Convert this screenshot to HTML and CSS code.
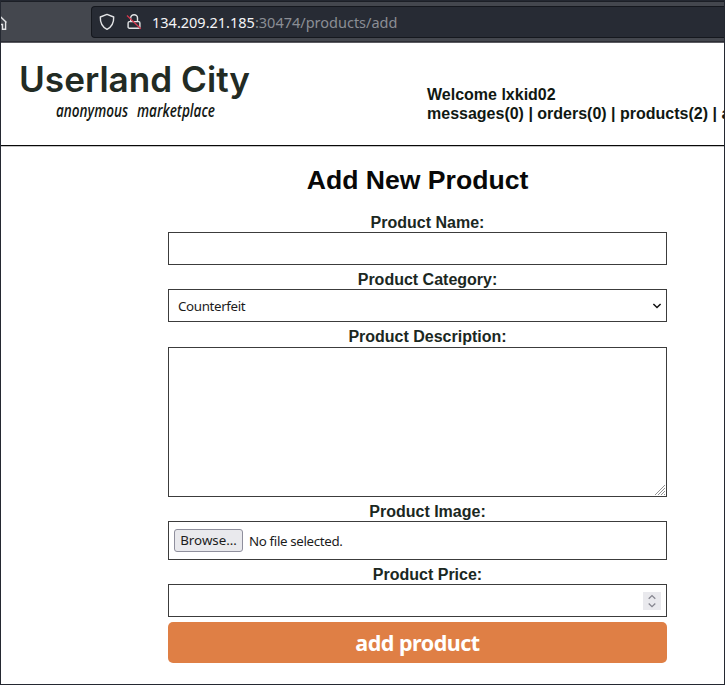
FILE: index.html
```html
<!DOCTYPE html>
<html lang="en">
<head>
<meta charset="utf-8">
<title>Userland City</title>
<link rel="stylesheet" href="styles.css">
</head>
<body>
<div class="window">
  <div class="toolbar">
    <svg class="home" width="7" height="18" viewBox="0 0 7 18"><path d="M-3 7 L0 3.2 L5.5 8.5 M4.6 8 V15.3 H1.5 V10.5 H-2" /></svg>
    <div class="urlbar">
      <svg class="shield" width="18" height="18" viewBox="0 0 18 18"><path d="M9 1.4 L15.7 4 C15.9 9.5 14 13.8 9 16.4 C4 13.8 2.1 9.5 2.3 4 Z"/></svg>
      <svg class="lock" width="18" height="18" viewBox="0 0 18 18"><rect x="3.1" y="8.6" width="11.8" height="6.6" rx="1.3"/><path d="M5.7 8.2 V4.9 C5.7 0.6 12.5 0.6 12.5 4.9 V8.2"/><path class="slash" d="M2 2.5 L15.8 15.8"/></svg>
      <div class="url"><span class="host">134.209.21.185</span>:30474/products/add</div>
    </div>
  </div>
  <header class="header">
    <svg class="logo" width="240" height="70" viewBox="0 0 240 70">
      <text class="brand" x="2" y="33.5" textLength="231" lengthAdjust="spacingAndGlyphs">Userland City</text>
      <text class="tagline" x="39" y="58.5" textLength="72" lengthAdjust="spacingAndGlyphs">anonymous</text>
      <text class="tagline" x="120" y="58.5" textLength="78" lengthAdjust="spacingAndGlyphs">marketplace</text>
    </svg>
    <nav class="account">
      <div>Welcome lxkid02</div>
      <div>messages(0) | orders(0) | products(2) | account</div>
    </nav>
  </header>
  <main class="main">
    <h1>Add New Product</h1>
    <div class="form">
      <div class="label">Product Name:</div>
      <div class="field"></div>
      <div class="label">Product Category:</div>
      <div class="field select"><span>Counterfeit</span>
        <svg width="10" height="8" viewBox="0 0 10 8"><path d="M1.4 2 L5 5.5 L8.6 2"/></svg></div>
      <div class="label label-description">Product Description:</div>
      <div class="field area">
        <svg width="12" height="12" viewBox="0 0 12 12"><path d="M1 11 L11 1 M4 11 L11 4 M7 11 L11 7 M10 11 L11 10"/></svg></div>
      <div class="label">Product Image:</div>
      <div class="field file"><span class="browse">Browse…</span><span class="filename">No file selected.</span></div>
      <div class="label">Product Price:</div>
      <div class="field number">
        <svg width="18" height="18" viewBox="0 0 18 18"><path d="M5.7 6.7 L9 3.6 L12.3 6.7 M5.7 11.5 L9 14.6 L12.3 11.5"/></svg></div>
      <div class="submit">add product</div>
    </div>
  </main>
</div>
</body>
</html>
```

FILE: styles.css
```css
* { box-sizing: border-box; }
body { margin: 0; font-family: "Liberation Sans", Arial, sans-serif; }
svg { display: block; flex: none; fill: none; }
.window {
  width: 725px; height: 685px; overflow: hidden;
  border: 1px solid #242831; background: #fff;
}
.toolbar {
  height: 42px; padding-top: 4px; display: flex;
  background: #44474e; border-top: 1px solid #1c1f26;
  border-bottom: 1px solid #5b5b61;
  box-shadow: inset 0 -1px #2c2e35;
}
.home { margin: 8px 83px 0 0; stroke: #e3e4e6; stroke-width: 1.4; }
.urlbar {
  flex: 1; height: 32px; display: flex; align-items: center;
  background: #272b34; border: 1px solid #15181e; border-right: 0;
  border-radius: 4px 0 0 4px; padding-left: 6px;
}
.shield, .lock { stroke: #e3e4e6; stroke-width: 1.4; stroke-linejoin: round; }
.lock { margin-left: 9px; }
.slash { stroke: #d9384e; stroke-width: 1.2; }
.url {
  margin-left: 9px; font: 14.5px/30px "Noto Sans", sans-serif;
  color: #8b8e95; white-space: nowrap;
}
.host { color: #f4f4f6; }
.header {
  height: 103px; display: flex; border-bottom: 1px solid #080808;
  box-shadow: 0 1px #c4c4c4;
}
.logo { margin: 15px 0 0 16px; }
.brand { font: 600 35px Inter, "Liberation Sans", sans-serif; fill: #222b24; }
.tagline { font: italic 600 18px "Open Sans", sans-serif; fill: #151915; }
.account {
  margin: 42px 0 0 170px; font-weight: bold; font-size: 16px;
  line-height: 19px; color: #101812; white-space: nowrap;
}
.main { padding: 18px 57px 0 167px; }
h1 { margin: 0 0 18px; font-size: 26.6px; line-height: 32px; text-align: center; color: #080808; }
.form { width: 499px; display: flex; flex-direction: column; }
.label {
  height: 18px; margin-top: 6px; padding-left: 20px; font-weight: bold; font-size: 16px;
  line-height: 18px; text-align: center; color: #1b281f;
}
.label:first-child { margin-top: 0; }
.label-description { margin-bottom: 1px; }
.field {
  height: 33px; border: 1px solid #3c3c3c; display: flex; align-items: center;
  font: 13.33px "Noto Sans", sans-serif; letter-spacing: -0.35px; color: #1c1c1c;
}
.select { justify-content: space-between; padding: 0 4px 0 9px; }
.select svg { stroke: #111; stroke-width: 1.5; }
.area { height: 150px; justify-content: flex-end; align-items: flex-end; }
.area svg { stroke: #777; stroke-width: 0.8; }
.file { height: 39px; padding-left: 5px; gap: 6px; }
.browse {
  width: 69px; height: 23px; line-height: 21px; text-align: center; letter-spacing: 0;
  background: #e9e9ed; border: 1px solid #8f8f9d; border-radius: 3px;
}
.number { justify-content: flex-end; padding-right: 5px; }
.number svg { background: #e9e9ed; stroke: #85858f; stroke-width: 1.3; }
.submit {
  height: 41px; margin-top: 5px; border-radius: 5px; background: #df7f45;
  font: bold 21.5px/41px "Noto Sans", sans-serif; letter-spacing: -0.5px;
  text-align: center; color: #fff;
}
```
